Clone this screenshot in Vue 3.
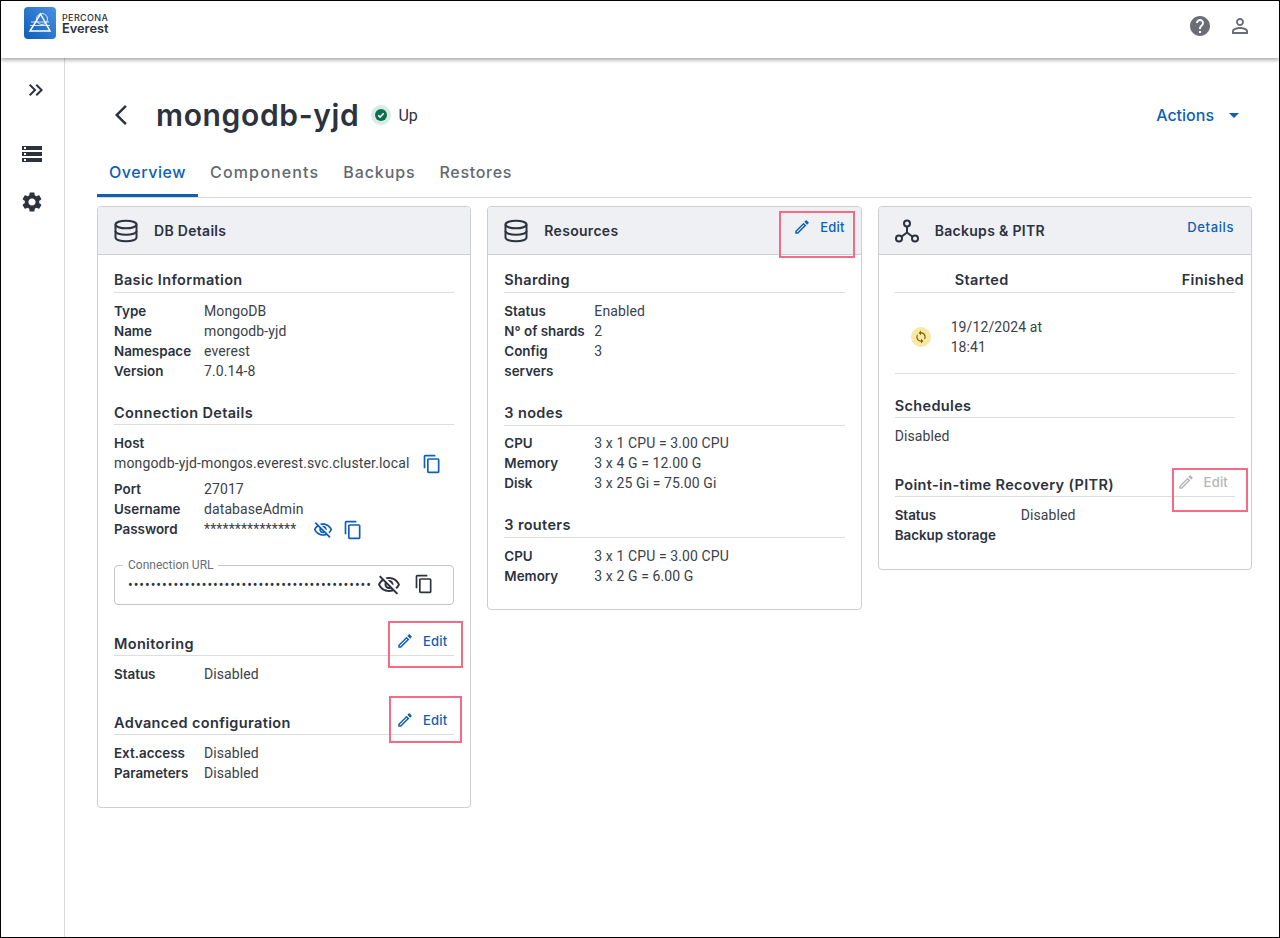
<template>
  <div class="frame">
    <header class="topbar">
      <div class="logo">
        <svg class="logo-mark" viewBox="0 0 32 32">
          <defs>
            <linearGradient id="logoGrad" x1="1" y1="0" x2="0" y2="1">
              <stop offset="0" stop-color="#4a90e2" />
              <stop offset="1" stop-color="#0e5fb5" />
            </linearGradient>
          </defs>
          <rect width="32" height="32" rx="4" fill="url(#logoGrad)" />
          <path d="M16.5 7 L26 24 L6 24 Z" fill="none" stroke="#fff" stroke-width="1.5" />
          <circle cx="18" cy="12" r="5.5" fill="none" stroke="#fff" stroke-width=".8" />
          <path d="M7 15h18M6 18.5h20" stroke="#fff" stroke-width="1" fill="none" opacity=".8" />
        </svg>
        <div class="logo-text">
          <span class="logo-top">PERCONA</span>
          <span class="logo-bottom">Everest</span>
        </div>
      </div>
      <div class="top-icons">
        <svg class="ic24" viewBox="0 0 24 24" fill="#6b6e76"><path :d="icons.help" /></svg>
        <svg class="ic24" viewBox="0 0 24 24" fill="#6b6e76"><path :d="icons.person" /></svg>
      </div>
    </header>

    <div class="body">
      <aside class="sidebar">
        <svg class="ic24" viewBox="0 0 24 24" fill="#2c323e"><path :d="icons.doubleArrow" /></svg>
        <svg class="ic24 side-storage" viewBox="0 0 24 24" fill="#2c323e"><path :d="icons.storage" /></svg>
        <svg class="ic24 side-gear" viewBox="0 0 24 24" fill="#2c323e"><path :d="icons.settings" /></svg>
      </aside>

      <main class="main">
        <div class="title-row">
          <svg class="ic24 back" viewBox="0 0 24 24" fill="#2c323e"><path :d="icons.back" /></svg>
          <h1>mongodb-yjd</h1>
          <span class="status-ring">
            <svg viewBox="0 0 24 24" width="12" height="12"><circle cx="12" cy="12" r="12" fill="#0b6e4f" /><path d="M6.5 12.5l3.7 3.7 7.3-7.7" fill="none" stroke="#fff" stroke-width="3" /></svg>
          </span>
          <span class="status-text">Up</span>
          <div class="actions">
            <span>Actions</span>
            <svg viewBox="0 0 24 24" width="24" height="24" fill="#0e5fb5"><path d="M7 10l5 5 5-5z" /></svg>
          </div>
        </div>

        <nav class="tabs">
          <span v-for="(t, i) in tabs" :key="t" class="tab" :class="{ active: i === 0 }">{{ t }}</span>
        </nav>

        <div class="cards">
          <!-- DB details -->
          <section class="card">
            <div class="card-head">
              <svg class="db-icon" viewBox="0 0 24 24" fill="none" stroke="#2c323e" stroke-width="2">
                <ellipse cx="12" cy="5.5" rx="10.5" ry="3.8" />
                <path d="M1.5 5.5v13c0 2.2 4.7 3.8 10.5 3.8s10.5-1.6 10.5-3.8v-13" />
                <path d="M1.5 12c0 2.2 4.7 3.8 10.5 3.8s10.5-1.6 10.5-3.8" />
              </svg>
              <span class="card-title">DB Details</span>
            </div>
            <div class="card-body">
              <div class="sec first">
                <div class="sec-title">Basic Information</div>
                <div v-for="r in basicInfo" :key="r[0]" class="row"><b>{{ r[0] }}</b><span>{{ r[1] }}</span></div>
              </div>
              <div class="sec thin">
                <div class="sec-title">Connection Details</div>
                <div class="row"><b>Host</b></div>
                <div class="row icon-row host-row">
                  <span>mongodb-yjd-mongos.everest.svc.cluster.local</span>
                  <svg class="ic20 host-copy" viewBox="0 0 24 24" fill="#0e5fb5"><path :d="icons.copy" /></svg>
                </div>
                <div class="row"><b>Port</b><span>27017</span></div>
                <div class="row"><b>Username</b><span>databaseAdmin</span></div>
                <div class="row icon-row">
                  <b>Password</b>
                  <span class="stars">***************</span>
                  <svg class="ic20 pw-eye" viewBox="0 0 24 24" fill="#0e5fb5"><path :d="icons.eyeOff" /></svg>
                  <svg class="ic20 pw-copy" viewBox="0 0 24 24" fill="#0e5fb5"><path :d="icons.copy" /></svg>
                </div>
                <fieldset class="url-box">
                  <legend>Connection URL</legend>
                  <span class="dots">{{ urlDots }}</span>
                  <svg class="ic24 url-eye" viewBox="0 0 24 24" fill="#2c323e"><path :d="icons.eyeOff" /></svg>
                  <svg class="ic20 url-copy" viewBox="0 0 24 24" fill="#2c323e"><path :d="icons.copy" /></svg>
                </fieldset>
              </div>
              <div class="sec thin wide">
                <div class="sec-title">
                  Monitoring
                  <span class="edit"><svg class="ic18" viewBox="0 0 24 24" fill="#0e5fb5"><path :d="icons.edit" /></svg>Edit<i class="mark"></i></span>
                </div>
                <div class="row"><b>Status</b><span>Disabled</span></div>
              </div>
              <div class="sec thin wide">
                <div class="sec-title">
                  Advanced configuration
                  <span class="edit"><svg class="ic18" viewBox="0 0 24 24" fill="#0e5fb5"><path :d="icons.edit" /></svg>Edit<i class="mark mark-adv"></i></span>
                </div>
                <div class="row"><b>Ext.access</b><span>Disabled</span></div>
                <div class="row"><b>Parameters</b><span>Disabled</span></div>
              </div>
            </div>
          </section>

          <!-- Resources -->
          <section class="card">
            <div class="card-head">
              <svg class="db-icon" viewBox="0 0 24 24" fill="none" stroke="#2c323e" stroke-width="2">
                <ellipse cx="12" cy="5.5" rx="10.5" ry="3.8" />
                <path d="M1.5 5.5v13c0 2.2 4.7 3.8 10.5 3.8s10.5-1.6 10.5-3.8v-13" />
                <path d="M1.5 12c0 2.2 4.7 3.8 10.5 3.8s10.5-1.6 10.5-3.8" />
              </svg>
              <span class="card-title">Resources</span>
              <span class="edit head-link"><svg class="ic18" viewBox="0 0 24 24" fill="#0e5fb5"><path :d="icons.edit" /></svg>Edit<i class="mark mark-head"></i></span>
            </div>
            <div class="card-body res-body">
              <div class="sec" v-for="s in resources" :key="s.title">
                <div class="sec-title">{{ s.title }}</div>
                <div v-for="r in s.rows" :key="r[0]" class="row"><b>{{ r[0] }}</b><span>{{ r[1] }}</span></div>
              </div>
            </div>
          </section>

          <!-- Backups -->
          <section class="card">
            <div class="card-head">
              <svg class="db-icon" viewBox="0 0 24 24" fill="none" stroke="#2c323e" stroke-width="2">
                <circle cx="12" cy="4.5" r="3" />
                <circle cx="4" cy="19.5" r="3" />
                <circle cx="20" cy="19.5" r="3" />
                <path d="M12 7.5V13.5L6.4 17.7M12 13.5l5.6 4.2" />
              </svg>
              <span class="card-title">Backups &amp; PITR</span>
              <span class="head-link details">Details</span>
            </div>
            <div class="card-body">
              <div class="backup-head">
                <span>Started</span>
                <span>Finished</span>
              </div>
              <div class="backup-row">
                <span class="sync">
                  <svg viewBox="0 0 24 24" width="14" height="14" fill="#7a6000"><path :d="icons.sync" /></svg>
                </span>
                <span class="backup-date">19/12/2024 at 18:41</span>
              </div>
              <div class="sec thin sched">
                <div class="sec-title">Schedules</div>
                <div class="row"><span class="plain">Disabled</span></div>
              </div>
              <div class="sec thin pitr">
                <div class="sec-title">
                  Point-in-time Recovery (PITR)
                  <span class="edit disabled"><svg class="ic18" viewBox="0 0 24 24" fill="#b4b6ba"><path :d="icons.edit" /></svg>Edit<i class="mark mark-pitr"></i></span>
                </div>
                <div class="row wide-label"><b>Status</b><span>Disabled</span></div>
                <div class="row wide-label"><b>Backup storage</b></div>
              </div>
            </div>
          </section>
        </div>
      </main>
    </div>
  </div>
</template>

<script setup>
const icons = {
  help: 'M12 2C6.48 2 2 6.48 2 12s4.48 10 10 10 10-4.48 10-10S17.52 2 12 2zm1 17h-2v-2h2v2zm2.07-7.75-.9.92C13.45 12.9 13 13.5 13 15h-2v-.5c0-1.1.45-2.1 1.17-2.83l1.24-1.26c.37-.36.59-.86.59-1.41 0-1.1-.9-2-2-2s-2 .9-2 2H8c0-2.21 1.79-4 4-4s4 1.79 4 4c0 .88-.36 1.68-.93 2.25z',
  person: 'M12 5.9c1.16 0 2.1.94 2.1 2.1s-.94 2.1-2.1 2.1S9.9 9.16 9.9 8s.94-2.1 2.1-2.1m0 9c2.97 0 6.1 1.46 6.1 2.1v1.1H5.9V17c0-.64 3.13-2.1 6.1-2.1M12 4C9.79 4 8 5.79 8 8s1.79 4 4 4 4-1.79 4-4-1.79-4-4-4zm0 9c-2.67 0-8 1.34-8 4v3h16v-3c0-2.66-5.33-4-8-4z',
  doubleArrow: 'M6.41 6 5 7.41 9.58 12 5 16.59 6.41 18l6-6z M13 6l-1.41 1.41L16.17 12l-4.58 4.59L13 18l6-6z',
  storage: 'M2 20h20v-4H2v4zm2-3h2v2H4v-2zM2 4v4h20V4H2zm4 3H4V5h2v2zm-4 7h20v-4H2v4zm2-3h2v2H4v-2z',
  settings: 'M19.14 12.94c.04-.3.06-.61.06-.94 0-.32-.02-.64-.07-.94l2.03-1.58c.18-.14.23-.41.12-.61l-1.92-3.32c-.12-.22-.37-.29-.59-.22l-2.39.96c-.5-.38-1.03-.7-1.62-.94l-.36-2.54c-.04-.24-.24-.41-.48-.41h-3.84c-.24 0-.43.17-.47.41l-.36 2.54c-.59.24-1.13.57-1.62.94l-2.39-.96c-.22-.08-.47 0-.59.22L2.74 8.87c-.12.21-.08.47.12.61l2.03 1.58c-.05.3-.09.63-.09.94s.02.64.07.94l-2.03 1.58c-.18.14-.23.41-.12.61l1.92 3.32c.12.22.37.29.59.22l2.39-.96c.5.38 1.03.7 1.62.94l.36 2.54c.05.24.24.41.48.41h3.84c.24 0 .44-.17.47-.41l.36-2.54c.59-.24 1.13-.56 1.62-.94l2.39.96c.22.08.47 0 .59-.22l1.92-3.32c.12-.22.07-.47-.12-.61l-2.01-1.58zM12 15.6c-1.98 0-3.6-1.62-3.6-3.6s1.62-3.6 3.6-3.6 3.6 1.62 3.6 3.6-1.62 3.6-3.6 3.6z',
  back: 'M17.77 3.77 16 2 6 12l10 10 1.77-1.77L9.54 12z',
  copy: 'M16 1H4c-1.1 0-2 .9-2 2v14h2V3h12V1zm3 4H8c-1.1 0-2 .9-2 2v14c0 1.1.9 2 2 2h11c1.1 0 2-.9 2-2V7c0-1.1-.9-2-2-2zm0 16H8V7h11v14z',
  eyeOff: 'M12 6c3.79 0 7.17 2.13 8.82 5.5-.59 1.22-1.42 2.27-2.41 3.12l1.41 1.41c1.39-1.23 2.49-2.77 3.18-4.53C21.27 7.11 17 4 12 4c-1.27 0-2.49.2-3.64.57l1.65 1.65C10.66 6.09 11.32 6 12 6zm-1.07 1.14L13 9.21c.57.25 1.03.71 1.28 1.28l2.07 2.07c.08-.34.14-.7.14-1.07C16.5 9.01 14.48 7 12 7c-.37 0-.72.05-1.07.14zM2.01 3.87l2.68 2.68C3.06 7.83 1.77 9.53 1 11.5 2.73 15.89 7 19 12 19c1.52 0 2.98-.29 4.32-.82l3.42 3.42 1.41-1.41L3.42 2.45 2.01 3.87zm7.5 7.5 2.61 2.61c-.04.01-.08.02-.12.02-1.38 0-2.5-1.12-2.5-2.5 0-.05.01-.08.01-.13zm-3.4-3.4 1.75 1.75c-.23.55-.36 1.15-.36 1.78 0 2.48 2.02 4.5 4.5 4.5.63 0 1.23-.13 1.77-.36l.98.98c-.88.24-1.8.38-2.75.38-3.79 0-7.17-2.13-8.82-5.5.7-1.43 1.72-2.61 2.93-3.53z',
  edit: 'M3 17.25V21h3.75L17.81 9.94l-3.75-3.75L3 17.25zM5.92 19H5v-.92l9.06-9.06.92.92L5.92 19zM20.71 5.63l-2.34-2.34c-.2-.2-.45-.29-.71-.29s-.51.1-.7.29l-1.83 1.83 3.75 3.75 1.83-1.83c.39-.39.39-1.02 0-1.41z',
  sync: 'M12 4V1L8 5l4 4V6c3.31 0 6 2.69 6 6 0 1.01-.25 1.97-.7 2.8l1.46 1.46C19.54 15.03 20 13.57 20 12c0-4.42-3.58-8-8-8zm0 14c-3.31 0-6-2.69-6-6 0-1.01.25-1.97.7-2.8L5.24 7.74C4.46 8.97 4 10.43 4 12c0 4.42 3.58 8 8 8v3l4-4-4-4v3z'
}

const tabs = ['Overview', 'Components', 'Backups', 'Restores']

const basicInfo = [
  ['Type', 'MongoDB'],
  ['Name', 'mongodb-yjd'],
  ['Namespace', 'everest'],
  ['Version', '7.0.14-8']
]

const resources = [
  {
    title: 'Sharding',
    rows: [
      ['Status', 'Enabled'],
      ['N° of shards', '2'],
      ['Config servers', '3']
    ]
  },
  {
    title: '3 nodes',
    rows: [
      ['CPU', '3 x 1 CPU = 3.00 CPU'],
      ['Memory', '3 x 4 G = 12.00 G'],
      ['Disk', '3 x 25 Gi = 75.00 Gi']
    ]
  },
  {
    title: '3 routers',
    rows: [
      ['CPU', '3 x 1 CPU = 3.00 CPU'],
      ['Memory', '3 x 2 G = 6.00 G']
    ]
  }
]

const urlDots = '•'.repeat(43)
</script>

<style>
body {
  margin: 0;
  background: #fff;
}
</style>

<style scoped>
.frame {
  box-sizing: border-box;
  width: 1280px;
  height: 938px;
  border: 1px solid #000;
  display: flex;
  flex-direction: column;
  overflow: hidden;
  font-family: Roboto, "Liberation Sans", sans-serif;
  font-size: 14px;
  color: #2c323e;
}
.ic24 { width: 24px; height: 24px; display: block; flex: none; }
.ic20 { width: 20px; height: 20px; display: block; flex: none; }
.ic18 { width: 18px; height: 18px; display: block; flex: none; }

.topbar {
  height: 57px;
  flex: none;
  display: flex;
  justify-content: space-between;
  padding: 6px 27px 0 23px;
  box-sizing: border-box;
  background: #fff;
  box-shadow: 0 2px 4px rgba(0, 0, 0, .35);
  position: relative;
}
.logo { display: flex; gap: 6px; align-items: flex-start; }
.logo-mark { width: 32px; height: 32px; }
.logo-text { display: flex; flex-direction: column; padding-top: 6px; }
.logo-top { font-family: Inter, sans-serif; font-size: 9px; line-height: 10px; letter-spacing: .35px; font-weight: 500; }
.logo-bottom { font-family: Inter, sans-serif; font-size: 12.8px; line-height: 12px; font-weight: 600; }
.top-icons { display: flex; gap: 16px; padding-top: 7px; }

.body { flex: 1; display: flex; min-height: 0; }
.sidebar {
  width: 64px;
  flex: none;
  box-sizing: border-box;
  border-right: 1px solid #d9d9dc;
  padding: 20px 0 0 23px;
}
.side-storage { margin-top: 40px; margin-left: -4px; }
.side-gear { margin-top: 24px; margin-left: -4px; }

.main { flex: 1; padding: 41px 27px 0 32px; min-width: 0; }
.title-row { display: flex; align-items: center; height: 32px; padding-left: 12px; }
.back { margin-right: 23px; }
h1 {
  margin: 0 12px 0 0;
  font-family: Inter, sans-serif;
  font-size: 30px;
  font-weight: 600;
  letter-spacing: .65px;
  line-height: 32px;
  color: #2c323e;
}
.status-ring {
  width: 20px;
  height: 20px;
  border-radius: 50%;
  background: #d5ebe3;
  display: flex;
  align-items: center;
  justify-content: center;
  margin-right: 7px;
}
.status-text { font-size: 16px; }
.actions {
  margin-left: auto;
  display: flex;
  align-items: center;
  gap: 8px;
  color: #0e5fb5;
  font-family: Inter, sans-serif;
  font-weight: 500;
  font-size: 16px;
  margin-right: 6px;
}

.tabs { display: flex; margin-top: 30px; border-bottom: 1px solid #d9d9dc; height: 36px; }
.tab {
  padding: 0 12px;
  line-height: 23px;
  font-family: Inter, sans-serif;
  font-size: 16px;
  font-weight: 500;
  letter-spacing: .55px;
  color: #646871;
  box-sizing: border-box;
  height: 36px;
}
.tab:nth-child(2) { letter-spacing: 1.15px; }
.tab:nth-child(3) { letter-spacing: .9px; }
.tab:nth-child(4) { letter-spacing: .7px; }
.tab.active { color: #0e5fb5; border-bottom: 3px solid #0e5fb5; }

.cards { display: grid; grid-template-columns: repeat(3, 1fr); gap: 16px; margin-top: 8px; align-items: start; }
.card { border: 1px solid #ccced1; border-radius: 4px; background: #fff; min-width: 0; }
.card-head {
  height: 47px;
  background: #eef0f4;
  border-bottom: 1px solid #ccced1;
  border-radius: 3px 3px 0 0;
  display: flex;
  align-items: center;
  padding: 0 16px;
  position: relative;
}
.db-icon { width: 24px; height: 24px; margin-right: 16px; flex: none; }
.card-title { font-family: Inter, sans-serif; font-weight: 600; font-size: 14px; letter-spacing: .3px; margin-top: -1px; }
.head-link { margin-left: auto; margin-top: -8px; }
.details { color: #0e5fb5; font-family: Inter, sans-serif; font-size: 13px; font-weight: 500; letter-spacing: .6px; padding-right: 1px; }

.card-body { padding: 13px 16px 24px; }
.res-body { padding-bottom: 23px; }
.sec + .sec { margin-top: 20px; }
.sec-title {
  font-family: Inter, sans-serif;
  font-weight: 600;
  font-size: 14.5px;
  letter-spacing: .35px;
  line-height: 24px;
  height: 24px;
  border-bottom: 1px solid #dcdde0;
  margin-bottom: 7px;
  display: flex;
  justify-content: space-between;
  position: relative;
}
.thin .sec-title { height: 23px; margin-bottom: 8px; }
.first .sec-title { margin-bottom: 8px; }
.res-body > .sec:first-child .sec-title,
.res-body > .sec:last-child .sec-title { margin-bottom: 8px; }
.row { display: flex; line-height: 20px; position: relative; }
.icon-row { height: 20px; align-items: flex-start; }
.row b {
  width: 90px;
  flex: none;
  font-family: Inter, sans-serif;
  font-weight: 600;
  font-size: 13.4px;
}
.row span { color: #3c4149; letter-spacing: .1px; }
.host-row { margin-bottom: 6px; }
.row.host-row span { letter-spacing: .15px; }
.host-copy { margin-left: 12px; margin-top: 1px; }
.row .stars { font-size: 14px; letter-spacing: .13px; }
.pw-eye { margin-left: 17px; margin-top: 1px; }
.pw-copy { margin-left: 10px; margin-top: 1px; }

.url-box {
  margin: 20px 0 0;
  padding: 0 0 0 13px;
  height: 46px;
  box-sizing: border-box;
  border: 1px solid #c4c6ca;
  border-radius: 4px;
  display: flex;
  align-items: center;
}
.url-box legend {
  font-size: 12px;
  line-height: 12px;
  padding: 0 5px;
  margin-left: -5px;
  color: #6b6e76;
}
.dots { font-size: 14px; letter-spacing: .95px; width: 243px; overflow: hidden; white-space: nowrap; color: #2c323e; margin-top: -6px; }
.url-eye { margin: -6px 0 0 6px; }
.url-copy { margin: -8px 0 0 13px; }

.wide { margin-top: 27px !important; }
.edit {
  position: relative;
  display: flex;
  align-items: center;
  gap: 9px;
  color: #0e5fb5;
  font-family: Inter, sans-serif;
  font-size: 13px;
  font-weight: 500;
  letter-spacing: .2px;
  line-height: 18px;
  height: 18px;
  padding-right: 7px;
}
.edit.disabled { color: #b4b6ba; }
.mark {
  position: absolute;
  left: -8px;
  top: -11px;
  width: 75px;
  height: 47px;
  box-sizing: border-box;
  border: 2px solid #f56a85;
  pointer-events: none;
}
.mark-adv { left: -7px; top: -15px; width: 73px; }
.mark-head { left: -14px; top: -7px; width: 76px; }
.mark-pitr { left: -5px; top: -5px; width: 76px; height: 44px; }
.head-link.edit { margin-top: -7px; padding-right: 0; }

.backup-head {
  display: flex;
  justify-content: space-between;
  font-family: Inter, sans-serif;
  font-weight: 600;
  font-size: 14.5px;
  letter-spacing: .35px;
  height: 24px;
  line-height: 24px;
  border-bottom: 1px solid #dcdde0;
  padding-left: 60px;
}
.backup-head span:last-child { margin-right: -9px; }
.backup-row {
  display: flex;
  align-items: center;
  height: 72px;
  padding-top: 8px;
  border-bottom: 1px solid #dcdde0;
  padding-left: 16px;
}
.sync {
  width: 20px;
  height: 20px;
  border-radius: 50%;
  background: #f7e8a4;
  display: flex;
  align-items: center;
  justify-content: center;
  margin-right: 20px;
}
.backup-date { width: 110px; line-height: 20px; color: #3c4149; letter-spacing: .1px; }
.sched { margin-top: 20px; }
.plain { color: #3c4149; }
.pitr { margin-top: 27px !important; }
.wide-label b { width: 126px; }
</style>
